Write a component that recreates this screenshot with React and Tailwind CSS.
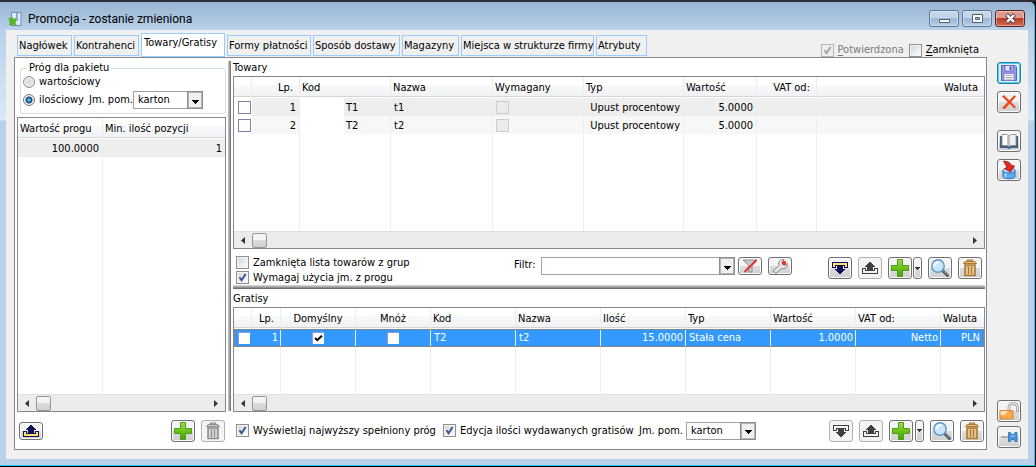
import React from "react";

const FONT = "font-['DejaVu_Sans_Condensed','DejaVu_Sans',sans-serif]";

function Check({ label, checked, disabled, accel, className = "", box = "border-[#8e8f8f]" }) {
  return (
    <label className={`inline-flex items-center gap-1 whitespace-nowrap ${disabled ? "text-[#7b7b7b]" : ""} ${className}`}>
      <span className="grid size-[13px] shrink-0">
        <input
          type="checkbox"
          defaultChecked={checked}
          disabled={disabled}
          className={`peer col-start-1 row-start-1 size-[13px] appearance-none border ${box} ${
            disabled ? "bg-[#eeeeee]" : "bg-[linear-gradient(135deg,#d0d4d8,#ffffff)] shadow-[inset_0_0_0_1px_#f4f4f4]"
          }`}
        />
        <svg viewBox="0 0 13 13" className="pointer-events-none invisible col-start-1 row-start-1 size-[13px] peer-checked:visible">
          <path d="M3.5 6.2 L5.6 9.2 L9.6 3" fill="none" stroke={disabled ? "#a6a6a6" : "#3f5596"} strokeWidth="2" />
        </svg>
      </span>
      <span>
        {accel ? <u className="underline-offset-2">{label[0]}</u> : label[0]}
        {label.slice(1)}
      </span>
    </label>
  );
}

function CellCheck({ label, checked, disabled, selected }) {
  return (
    <span className="grid size-[13px]">
      <input
        type="checkbox"
        aria-label={label}
        defaultChecked={checked}
        disabled={disabled}
        className={`peer col-start-1 row-start-1 appearance-none ${
          disabled
            ? "size-[13px] border border-[#cccccc] bg-[#ebebeb]"
            : selected
              ? "size-3 border-t border-l border-[#8f9ad0] bg-white"
              : "size-[13px] border border-[#8080b0] bg-white"
        }`}
      />
      <svg viewBox="0 0 13 13" className="pointer-events-none invisible col-start-1 row-start-1 size-[13px] peer-checked:visible">
        <path d="M3 6 L5.2 8.2 L10 3.8" fill="none" stroke="#000" strokeWidth="2" />
      </svg>
    </span>
  );
}

function Combo({ id, options, className = "" }) {
  return (
    <span className={`relative inline-flex h-[18px] ${className}`}>
      <select id={id} className="h-full w-full appearance-none border border-[#a0a0a0] bg-white pl-1 leading-4 text-black">
        {options.map((o) => (
          <option key={o}>{o}</option>
        ))}
      </select>
      <span className="pointer-events-none absolute inset-y-0 right-0 flex w-4 items-center justify-center border border-[#8c8c8c] bg-[#f0f0f0] shadow-[inset_0_0_0_1px_#b4b4b4]">
        <svg viewBox="0 0 7 4" className="mt-[3px] h-1 w-[7px]" shapeRendering="crispEdges">
          <path d="M0 0H7V1H6V2H5V3H4V4H3V3H2V2H1V1H0Z" />
        </svg>
      </span>
    </span>
  );
}

function Btn({ label, children, size = "h-[22px] w-6", faded, active }) {
  return (
    <button
      type="button"
      aria-label={label}
      title={label}
      disabled={faded}
      className={`flex shrink-0 items-center justify-center overflow-hidden rounded-[3px] border ${size} ${
        active
          ? "border-[#2c7f9f] bg-[#dff2fb] shadow-[inset_0_0_0_1px_#48d0f5]"
          : faded
            ? "border-[#adb2b5] bg-[#f4f4f4]"
            : "border-[#707070] bg-[linear-gradient(#f4f4f4_50%,#dddddd_50%,#cfcfcf)] shadow-[inset_0_0_0_1px_#fafafa]"
      }`}
    >
      {children}
    </button>
  );
}

const Plus = () => (
  <svg viewBox="0 0 20 20" className="size-5 shrink-0">
    <defs>
      <linearGradient id="plus" x2="0" y2="1">
        <stop offset="0" stopColor="#a4dc4a" />
        <stop offset="0.5" stopColor="#6cc316" />
        <stop offset="1" stopColor="#46a010" />
      </linearGradient>
    </defs>
    <path d="M7.5 1.5H12.5V7.5H18.5V12.5H12.5V18.5H7.5V12.5H1.5V7.5H7.5Z" fill="url(#plus)" stroke="#4d9a1c" />
  </svg>
);

const Trash = ({ c = "#a87834", f = "#e6c48c" }) => (
  <svg viewBox="0 0 16 18" className="h-[18px] w-4 shrink-0">
    <path d="M5.500 2.500V1.200H10.500V2.500" fill="none" stroke={c} strokeWidth="1.200" />
    <path d="M1.500 4.500 3 2.500H13L14.500 4.500Z" fill={f} stroke={c} />
    <path d="M3 6H13V16.500H3Z" fill={f} stroke={c} strokeWidth="1.600" />
    <path d="M6.500 7.500V15M9.500 7.500V15" stroke={c} strokeWidth="1.200" />
  </svg>
);

const Lens = () => (
  <svg viewBox="0 0 20 20" className="size-5 shrink-0">
    <path d="M12 12 L17.500 17.500" stroke="#4a5464" strokeWidth="3" strokeLinecap="round" />
    <path d="M12.500 12 L17.500 17" stroke="#98a2b2" strokeWidth="1" strokeLinecap="round" />
    <circle cx="8" cy="8" r="6.200" fill="#c8e6fb" stroke="#5c94c8" strokeWidth="1.400" />
    <path d="M4.500 8A3.800 3.800 0 0 1 9 4.300" fill="none" stroke="#fff" strokeWidth="1.800" />
  </svg>
);

const Raise = ({ c = "#404040", f = "#f4f4f4" }) => (
  <svg viewBox="0 0 16 12" className="h-3 w-4 shrink-0" shapeRendering="crispEdges">
    <path d="M.5 6.500H3.500V8.500H12.500V6.500H15.500V11.500H.5Z" fill={f} stroke={c} />
    <path d="M7 0H9V1H10V2H11V3H12V4H13V5H11V8H5V5H3V4H4V3H5V2H6V1H7Z" fill={c} />
  </svg>
);

const Lower = ({ c = "#404040", f = "#f4f4f4" }) => (
  <svg viewBox="0 0 16 12" className="h-3 w-4 shrink-0" shapeRendering="crispEdges">
    <path d="M.5 .5H15.500V5.500H12.500V3.500H3.500V5.500H.5Z" fill={f} stroke={c} />
    <path d="M5 4H11V7H13V8H12V9H11V10H10V11H9V12H7V11H6V10H5V9H4V8H3V7H5Z" fill={c} />
  </svg>
);

const Caret = () => (
  <svg viewBox="0 0 5 3" className="h-[3px] w-[5px] shrink-0" shapeRendering="crispEdges">
    <path d="M0 0H5V1H4V2H3V3H2V2H1V1H0Z" fill="#333" />
  </svg>
);

const Disk = () => (
  <svg viewBox="0 0 18 18" className="size-[18px] shrink-0">
    <path d="M1.500 1.500H15L16.500 3V16.500H1.500Z" fill="#8f97e8" stroke="#5a62bc" />
    <path d="M5 1.500H13V7H5Z" fill="#e4e6fa" stroke="#5a62bc" strokeWidth=".8" />
    <path d="M9.500 2.500H11.500V6H9.500Z" fill="#4a52b0" />
    <path d="M4 9.500H14V16.500H4Z" fill="#fafafa" stroke="#6d76cc" strokeWidth=".8" />
    <path d="M5.500 11.500H12.500M5.500 13.500H12.500M5.500 15.200H12.500" stroke="#9a9a9a" strokeWidth=".8" />
  </svg>
);

const Cross = () => (
  <svg viewBox="0 0 16 16" className="size-4 shrink-0">
    <path d="M1.500 2.500 3 1.500 14.500 13 13.500 14ZM13.500 1.500 14.500 2.500 4 14.500 1.500 14Z" fill="#f4481c" stroke="#ee3c14" strokeWidth=".8" strokeLinejoin="round" />
  </svg>
);

const Book = () => (
  <svg viewBox="0 0 20 16" className="h-4 w-5 shrink-0">
    <path d="M1.500 3V14.500H8.500L10 15.500L11.500 14.500H18.500V3" fill="#3a6488" stroke="#3f6284" strokeWidth="1.200" />
    <path d="M3 1.500H8L10 3V13.500L8 12.500H3Z" fill="#fff" stroke="#8a8a8a" strokeWidth=".8" />
    <path d="M17 1.500H12L10 3V13.500L12 12.500H17Z" fill="#f0f0f0" stroke="#8a8a8a" strokeWidth=".8" />
    <path d="M8.700 3V12" stroke="#b8b8b8" />
  </svg>
);

const Import = () => (
  <svg viewBox="0 0 18 20" className="h-5 w-[18px] shrink-0">
    <path d="M3 10.500V16.500C3 19.500 15 19.500 15 16.500V10.500Z" fill="#5aaef0" stroke="#2a6cb8" />
    <ellipse cx="9" cy="10.500" rx="6" ry="2.600" fill="#b4dcfa" stroke="#2a6cb8" />
    <path d="M5.500 13V17.500" stroke="#b9defa" strokeWidth="1.500" />
    <path d="M3.500 1 L8.500 2 L12 5.500 L14.500 6 L10.500 12 L4.500 8.500 L7 7.500 Z" fill="#e8281c" stroke="#8c1410" strokeWidth=".8" />
  </svg>
);

const Padlock = () => (
  <svg viewBox="0 0 20 18" className="h-[18px] w-5 shrink-0">
    <path d="M10 8.500V5.500A4.200 4.200 0 0 1 18.400 5.500V10" fill="none" stroke="#8a8a8a" strokeWidth="2.800" />
    <path d="M10 8.500V5.500A4.200 4.200 0 0 1 18.400 5.500V9.500" fill="none" stroke="#eeeeee" strokeWidth="1.400" />
    <path d="M1 8.500H14V17H1Z" fill="#f8a94a" stroke="#c87a20" strokeWidth=".8" />
    <path d="M1.500 9H9L6 13H1.500Z" fill="#fde0b0" />
  </svg>
);

const Pin = () => (
  <svg viewBox="0 0 18 12" className="h-3 w-[18px] shrink-0">
    <path d="M1 6H9" stroke="#9a9a9a" strokeWidth="1.300" />
    <path d="M8.500 1.500H10.500L11.500 3.500H14L15 1.500H17V10.500H15L14 8.500H11.500L10.500 10.500H8.500Z" fill="#4c94dc" stroke="#2a6cb4" strokeWidth=".8" />
    <path d="M11 5H14.500" stroke="#a8d0f4" />
  </svg>
);

const FilterOff = () => (
  <svg viewBox="0 0 18 16" className="h-4 w-[18px] shrink-0">
    <path d="M2 2H16L11 7.500V14H7.500V7.500Z" fill="#c8c8c8" stroke="#8f8f8f" />
    <path d="M3.500 14 15.500 2" stroke="#e03030" strokeWidth="2" />
  </svg>
);

const Wrench = () => (
  <svg viewBox="0 0 18 16" className="h-4 w-[18px] shrink-0">
    <path d="M2 13 8 7.500C6.500 4 9.500 1 13 1.500L11 4.500 13.500 7.500 16.500 5.500C17 9 13.500 11.500 10.500 10.500L5 15.500Z" fill="#e4e4e4" stroke="#858585" />
    <circle cx="13" cy="5" r="2.200" fill="#e03a30" />
  </svg>
);

function Scroll() {
  return (
    <div className="flex h-[17px] shrink-0 items-center justify-between border-t border-[#e0e0e0] bg-[#ececec] px-[7px]">
      <div className="flex items-center gap-[7px]">
        <svg viewBox="0 0 4 7" className="h-[7px] w-1"><path d="M4 0V7L0 3.500Z" fill="#333" /></svg>
        <span className="h-[15px] w-[15px] rounded-[2px] border border-[#979797] bg-[linear-gradient(#f4f4f4_50%,#dadada_50%,#d0d0d0)]" />
      </div>
      <svg viewBox="0 0 4 7" className="h-[7px] w-1"><path d="M0 0V7L4 3.500Z" fill="#333" /></svg>
    </div>
  );
}

const TH =
  "h-[21px] truncate border-r border-[#ebecee] bg-[linear-gradient(#ffffff_8px,#f8f9fb_8px,#f1f2f4_19px,#d5d5d5_19px,#d5d5d5_20px,#ffffff_20px)] px-[2px] font-normal last:border-r-0";
const TD = "h-[18px] whitespace-nowrap border-r border-[#eeeeee] px-[3px] pt-px last:border-r-0";
const SEL =
  "h-[18px] whitespace-nowrap border-y border-dotted border-[#c8721e] bg-[#3399ff] px-[3px] shadow-[inset_-1px_0_0_#e4f0ff] last:border-r last:shadow-none";

function List({ cols, children, filler, className = "" }) {
  return (
    <div className={`flex flex-col border border-[#828790] bg-white ${className}`}>
      <div className="flex grow">
        <table className="w-full table-fixed border-separate border-spacing-0">
          <colgroup>
            {cols.map((c, i) => (
              <col key={i} className={c.w} />
            ))}
          </colgroup>
          <thead>
            <tr>
              {cols.map((c, i) => (
                <th key={i} className={`${TH} ${c.cls || "text-left"}`}>
                  {c.t}
                </th>
              ))}
            </tr>
          </thead>
          <tbody>
            {children}
            <tr aria-hidden="true">
              {cols.map((c, i) => (
                <td key={i} className={`${i === 0 && filler ? "border-r-0" : "border-r"} border-[#eeeeee] last:border-r-0`} />
              ))}
            </tr>
          </tbody>
        </table>
      </div>
      <Scroll />
    </div>
  );
}

const goodsCols = [
  { t: "", w: "w-[18px]" },
  { t: "Lp.", w: "w-[48px]", cls: "text-right pr-[6px]" },
  { t: "Kod", w: "w-[91px]" },
  { t: "Nazwa", w: "w-[102px]" },
  { t: "Wymagany", w: "w-[91px]" },
  { t: "Typ", w: "w-[100px]" },
  { t: "Wartość", w: "w-[73px]" },
  { t: "VAT od:", w: "w-[60px]", cls: "text-right pr-[6px]" },
  { t: "Waluta", cls: "text-right pr-[6px]" },
];

const freeCols = [
  { t: "", w: "w-[18px]" },
  { t: "Lp.", w: "w-[29px]", cls: "text-right pr-[6px]" },
  { t: "Domyślny", w: "w-[75px]", cls: "text-center" },
  { t: "Mnóż", w: "w-[75px]", cls: "text-center" },
  { t: "Kod", w: "w-[85px]" },
  { t: "Nazwa", w: "w-[85px]" },
  { t: "Ilość", w: "w-[85px]" },
  { t: "Typ", w: "w-[85px]" },
  { t: "Wartość", w: "w-[85px]" },
  { t: "VAT od:", w: "w-[85px]" },
  { t: "Waluta" },
];

const goods = [
  { n: 1, kod: "T1", nazwa: "t1", bg: "bg-[#eeeeee]" },
  { n: 2, kod: "T2", nazwa: "t2", bg: "bg-[#f7f7f7]" },
];

const tabs = [
  { t: "Nagłówek", w: "w-[55px]" },
  { t: "Kontrahenci", w: "w-[65px]" },
  { t: "Towary/Gratisy", w: "w-[84px]", on: true },
  { t: "Formy płatności", w: "w-[84px]" },
  { t: "Sposób dostawy", w: "w-[87px]" },
  { t: "Magazyny", w: "w-[57px]" },
  { t: "Miejsca w strukturze firmy", w: "w-[133px]" },
  { t: "Atrybuty", w: "w-[51px]" },
];

export default function App() {
  return (
    <div className={`flex min-h-screen flex-col border-t-2 border-r border-b border-black border-t-[#2f2c38] bg-black text-[11px] leading-[14px] text-black ${FONT}`}>
      <div className="flex grow flex-col rounded-tr-[5px] border-r border-b border-[#2cc4e0] bg-[linear-gradient(#98b4d2,#b9d1ea_28px,#d9e8f7_115px,#dbe9f8_118px,#b9d1ea_119px)]">
        <header className="flex h-7 shrink-0 items-center pt-[5px] pr-[9px] pl-2">
          <svg viewBox="0 0 14 16" className="h-4 w-3.5">
            <path d="M3.500 1.500H13V14.500H3.500Z" fill="#dfe8f5" stroke="#7a8db0" />
            <path d="M9 2V10" stroke="#94a8cc" strokeWidth="2" />
            <path d="M1 7 8 14M8 7.500 1.500 14M1 10.500H8M4.500 6.500V14.500" stroke="#52b51e" strokeWidth="1.800" />
          </svg>
          <h1 className="ml-[6px] grow font-[Roboto,sans-serif] text-[12px] font-normal">Promocja - zostanie zmieniona</h1>
          <div className="flex gap-[3px]">
            {["Minimalizuj", "Maksymalizuj", "Zamknij"].map((t, i) => (
              <button
                key={t}
                type="button"
                aria-label={t}
                className={`flex h-[17px] w-[30px] items-center justify-center rounded-[3px] border shadow-[inset_0_0_0_1px_#ffffff66] ${
                  i === 2
                    ? "border-[#5b2320] bg-[linear-gradient(#dd9a8d_45%,#bb3d2c_50%,#cf6a50)]"
                    : "border-[#5e7590] bg-[linear-gradient(#c5d6ea_45%,#9db8d4_50%,#b4cde6)]"
                }`}
              >
                <svg viewBox="0 0 13 11" className="h-[11px] w-[13px]">
                  {i === 0 && <path d="M1.500 6.500H11.500V9.500H1.500Z" fill="#fff" stroke="#555d70" />}
                  {i === 1 && <path fillRule="evenodd" d="M1.500 1.500H11.500V9.500H1.500ZM4.500 4.500V6.500H8.500V4.500Z" fill="#fff" stroke="#555d70" />}
                  {i === 2 && (
                    <>
                      <path d="M2.500 1.500 10.500 9.500M10.500 1.500 2.500 9.500" stroke="#5a3f4a" strokeWidth="4" />
                      <path d="M3 2 10 9M10 2 3 9" stroke="#fff" strokeWidth="2.400" />
                    </>
                  )}
                </svg>
              </button>
            ))}
          </div>
        </header>

        <main className="mr-[6px] mb-[6px] ml-[6px] flex grow bg-[#f0f0f0] pb-[9px] pl-2">
          <div className="flex min-w-0 grow flex-col pt-[3px]">
            <div className="flex h-6 shrink-0 items-end justify-between pr-[10px]">
              <nav role="tablist" className="flex items-end gap-[2px] pl-[3px]">
                {tabs.map((tab) => (
                  <button
                    key={tab.t}
                    type="button"
                    role="tab"
                    aria-selected={!!tab.on}
                    className={`border border-[#99ccff] text-left whitespace-nowrap ${tab.w} ${
                      tab.on ? "h-6 bg-white px-[2px] pb-1" : "mb-px h-[21px] bg-[#f0f0f0] px-px"
                    }`}
                  >
                    {tab.t}
                  </button>
                ))}
              </nav>
              <div className="flex gap-[5px]">
                <Check label="Potwierdzona" accel checked disabled box="border-[#b4b4b4]" />
                <Check label="Zamknięta" accel />
              </div>
            </div>

            <section className="mr-[2px] flex grow border border-[#828790] bg-white pr-px pl-[2px]">
              <div className="flex w-[209px] shrink-0 flex-col pt-[3px]">
                <fieldset className="ml-[3px] h-[53px] rounded-[3px] border border-[#d5dfe5] px-[2px]">
                  <legend className="ml-1 px-[2px]">Próg dla pakietu</legend>
                  <label className="flex h-[14px] items-center gap-1">
                    <input type="radio" name="prog" className="size-3 appearance-none rounded-full border border-[#8e8f8f] bg-[radial-gradient(#d4d8dc,#f4f4f4)]" />
                    wartościowy
                  </label>
                  <div className="mt-[2px] flex items-center">
                    <label className="flex w-[66px] items-center gap-1 whitespace-nowrap">
                      <input type="radio" name="prog" defaultChecked className="size-3 shrink-0 appearance-none rounded-full border border-[#6e7478] bg-[radial-gradient(circle,#4fb4e0_1px,#10406e_3px,#f4f4f4_4px)]" />
                      ilościowy
                    </label>
                    <label htmlFor="jm1" className="w-[44px] whitespace-nowrap">Jm. pom.</label>
                    <Combo id="jm1" options={["karton"]} className="w-[70px]" />
                  </div>
                </fieldset>
                <List
                  className="mt-[3px] grow"
                  cols={[{ t: "Wartość progu", w: "w-[85px]" }, { t: "Min. ilość pozycji" }]}
                >
                  <tr className="bg-[#eeeeee]">
                    <td className={`${TD} text-right`}>100.0000</td>
                    <td className={`${TD} text-right`}>1</td>
                  </tr>
                </List>
                <div className="flex h-[37px] shrink-0 items-center gap-[6px] pr-px pl-[2px]">
                  <Btn label="Przenieś w górę" size="h-[18px] w-6"><Raise c="#10105a" f="#ffe070" /></Btn>
                  <span className="grow" />
                  <Btn label="Dodaj próg"><Plus /></Btn>
                  <Btn label="Usuń próg" faded><Trash c="#8c8c8c" f="#d4d4d4" /></Btn>
                </div>
              </div>

              <div className="mx-[2px] mt-[3px] mb-[38px] w-[3px] shrink-0 bg-[linear-gradient(90deg,#c8c8c8,#a0a0a0_50%,#696969)]" />

              <div className="flex min-w-0 grow flex-col">
                <h2 className="h-[18px] shrink-0 pt-[3px]">Towary</h2>
                <List cols={goodsCols} filler className="h-[173px] shrink-0">
                  {goods.map((r) => (
                    <tr key={r.n} className={r.bg}>
                      <td className="h-[18px] bg-white pl-1"><CellCheck label={`Towar ${r.n}`} /></td>
                      <td className={`${TD} text-right`}>{r.n}</td>
                      <td className={`${TD} bg-[linear-gradient(90deg,#ffffff_44px,transparent_44px)]`}><span className="pl-[43px]">{r.kod}</span></td>
                      <td className={TD}>{r.nazwa}</td>
                      <td className={TD}><CellCheck label={`Wymagany ${r.n}`} disabled /></td>
                      <td className={`${TD} text-right`}>Upust procentowy</td>
                      <td className={`${TD} text-right`}>5.0000</td>
                      <td className={TD} />
                      <td className={TD} />
                    </tr>
                  ))}
                </List>

                <div className="flex h-9 shrink-0 items-start px-[3px] pt-2">
                  <div className="-mt-[2px] flex w-[278px] flex-col">
                    <Check label="Zamknięta lista towarów z grup" className="h-[15px]" />
                    <Check label="Wymagaj użycia jm. z progu" checked className="h-[15px]" />
                  </div>
                  <label htmlFor="filtr" className="w-[27px] pt-px">Filtr:</label>
                  <Combo id="filtr" options={[""]} className="max-w-[194px] min-w-[80px] grow" />
                  <div className="ml-[3px] flex gap-[6px]">
                    <Btn label="Wyczyść filtr" size="h-[18px] w-6"><FilterOff /></Btn>
                    <Btn label="Konfiguruj filtr" size="h-[18px] w-6"><Wrench /></Btn>
                  </div>
                  <div className="ml-auto flex gap-[6px]">
                    <Btn label="Przenieś w dół"><Lower c="#10105a" f="#ffe070" /></Btn>
                    <Btn label="Przenieś w górę" faded><Raise /></Btn>
                    <div className="flex gap-px">
                      <Btn label="Dodaj towar"><Plus /></Btn>
                      <Btn label="Więcej opcji" size="h-[22px] w-[9px]"><Caret /></Btn>
                    </div>
                    <Btn label="Podgląd"><Lens /></Btn>
                    <Btn label="Usuń towar"><Trash /></Btn>
                  </div>
                </div>
                <div className="h-1 shrink-0 bg-[linear-gradient(#e0e0e0,#a0a0a0_50%,#606060)]" />

                <h2 className="h-[18px] shrink-0 pt-[3px]">Gratisy</h2>
                <List cols={freeCols} filler className="min-h-[105px] grow">
                  <tr className="text-white">
                    <td className="h-[18px] border-y border-l border-dotted border-[#c8721e] bg-[#3399ff] pl-[3px]"><CellCheck label="Gratis 1" selected /></td>
                    <td className={`${SEL} text-right`}>1</td>
                    <td className={SEL}><span className="flex justify-center"><CellCheck label="Domyślny" checked selected /></span></td>
                    <td className={SEL}><span className="flex justify-center"><CellCheck label="Mnóż" selected /></span></td>
                    <td className={SEL}>T2</td>
                    <td className={SEL}>t2</td>
                    <td className={`${SEL} text-right`}>15.0000</td>
                    <td className={SEL}>Stała cena</td>
                    <td className={`${SEL} text-right`}>1.0000</td>
                    <td className={`${SEL} text-right`}>Netto</td>
                    <td className={`${SEL} text-right`}>PLN</td>
                  </tr>
                </List>

                <div className="flex h-[37px] shrink-0 items-center pr-px pl-[3px]">
                  <Check label="Wyświetlaj najwyższy spełniony próg" checked className="w-[207px]" />
                  <Check label="Edycja ilości wydawanych gratisów" checked className="w-[196px]" />
                  <label htmlFor="jm2" className="w-[47px] whitespace-nowrap">Jm. pom.</label>
                  <Combo id="jm2" options={["karton"]} className="w-[70px]" />
                  <div className="ml-auto flex gap-[6px]">
                    <Btn label="Przenieś w dół" faded><Lower /></Btn>
                    <Btn label="Przenieś w górę" faded><Raise /></Btn>
                    <div className="flex gap-[2px]">
                      <Btn label="Dodaj gratis"><Plus /></Btn>
                      <Btn label="Więcej opcji" size="h-[22px] w-[9px]"><Caret /></Btn>
                    </div>
                    <Btn label="Podgląd"><Lens /></Btn>
                    <Btn label="Usuń gratis"><Trash /></Btn>
                  </div>
                </div>
              </div>
            </section>
          </div>

          <aside className="flex w-[39px] shrink-0 flex-col items-center gap-[7px] pt-8">
            <Btn label="Zapisz" active><Disk /></Btn>
            <Btn label="Anuluj"><Cross /></Btn>
            <div className="mt-[10px]"><Btn label="Słownik"><Book /></Btn></div>
            <Btn label="Importuj"><Import /></Btn>
            <div className="mt-auto flex flex-col gap-1 pb-[2px]">
              <Btn label="Odblokuj"><Padlock /></Btn>
              <Btn label="Przypnij"><Pin /></Btn>
            </div>
          </aside>
        </main>
      </div>
    </div>
  );
}
